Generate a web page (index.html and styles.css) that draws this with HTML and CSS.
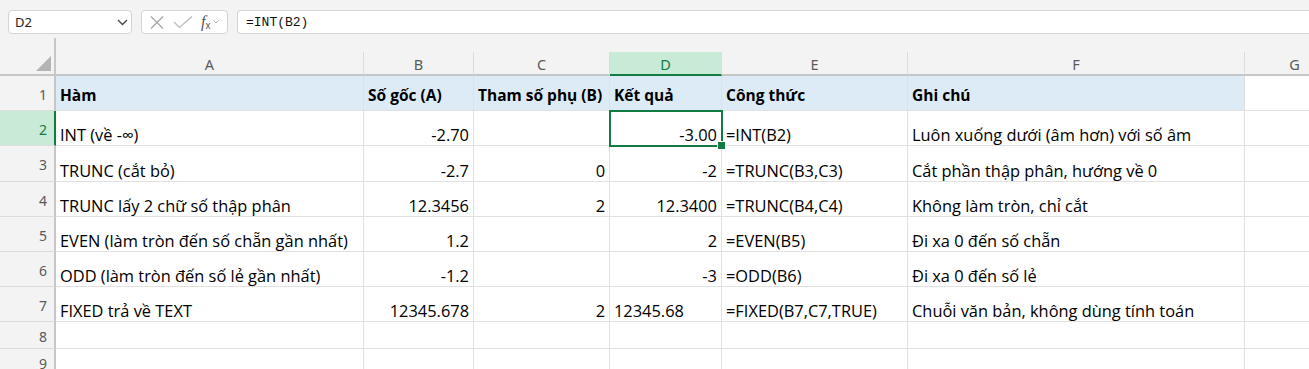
FILE: index.html
```html
<!DOCTYPE html>
<html lang="vi">
<head>
  <meta charset="UTF-8" />
  <title>Sheet1</title>
  <link rel="stylesheet" href="styles.css">
</head>
<body>
  <div class="app">
    <div class="formula-bar">
      <div class="name-box">
        <span>D2</span>
        <svg class="chev" width="11" height="7" viewBox="0 0 11 7"><path d="M1 1l4.5 4.5L10 1" fill="none" stroke="#444" stroke-width="1.3"/></svg>
      </div>
      <div class="fx-box">
        <svg width="14" height="13" viewBox="0 0 14 13"><path d="M1 0.5l12 12M13 0.5l-12 12" fill="none" stroke="#a8a8a8" stroke-width="1.3"/></svg>
        <svg width="20" height="12" viewBox="0 0 20 12"><path d="M1 6l5.5 5.5L19 0.5" fill="none" stroke="#bdbdbd" stroke-width="1.3"/></svg>
        <span class="fx"><i>f</i><sub>x</sub></span>
        <svg width="6" height="4" viewBox="0 0 6 4"><path d="M0.5 0.5l2.5 2.5 2.5-2.5" fill="none" stroke="#aaa" stroke-width="1"/></svg>
      </div>
      <div class="formula-input">=INT(B2)</div>
    </div>

    <div class="grid">
      <div class="corner"><span class="tri"></span></div>
      <div class="gap"></div>

      <div class="ch">A</div>
      <div class="ch">B</div>
      <div class="ch">C</div>
      <div class="ch active">D</div>
      <div class="ch">E</div>
      <div class="ch">F</div>
      <div class="ch">G</div>

      <div class="rh">1</div>
      <div class="cell hdr">Hàm</div>
      <div class="cell hdr">Số gốc (A)</div>
      <div class="cell hdr">Tham số phụ (B)</div>
      <div class="cell hdr">Kết quả</div>
      <div class="cell hdr">Công thức</div>
      <div class="cell hdr">Ghi chú</div>
      <div class="cell"></div>

      <div class="rh active">2</div>
      <div class="cell">INT (về -∞)</div>
      <div class="cell num">-2.70</div>
      <div class="cell num"></div>
      <div class="cell num sel">-3.00</div>
      <div class="cell">=INT(B2)</div>
      <div class="cell">Luôn xuống dưới (âm hơn) với số âm</div>
      <div class="cell"></div>

      <div class="rh">3</div>
      <div class="cell">TRUNC (cắt bỏ)</div>
      <div class="cell num">-2.7</div>
      <div class="cell num">0</div>
      <div class="cell num">-2</div>
      <div class="cell">=TRUNC(B3,C3)</div>
      <div class="cell">Cắt phần thập phân, hướng về 0</div>
      <div class="cell"></div>

      <div class="rh">4</div>
      <div class="cell">TRUNC lấy 2 chữ số thập phân</div>
      <div class="cell num">12.3456</div>
      <div class="cell num">2</div>
      <div class="cell num">12.3400</div>
      <div class="cell">=TRUNC(B4,C4)</div>
      <div class="cell">Không làm tròn, chỉ cắt</div>
      <div class="cell"></div>

      <div class="rh">5</div>
      <div class="cell">EVEN (làm tròn đến số chẵn gần nhất)</div>
      <div class="cell num">1.2</div>
      <div class="cell num"></div>
      <div class="cell num">2</div>
      <div class="cell">=EVEN(B5)</div>
      <div class="cell">Đi xa 0 đến số chẵn</div>
      <div class="cell"></div>

      <div class="rh">6</div>
      <div class="cell">ODD (làm tròn đến số lẻ gần nhất)</div>
      <div class="cell num">-1.2</div>
      <div class="cell num"></div>
      <div class="cell num">-3</div>
      <div class="cell">=ODD(B6)</div>
      <div class="cell">Đi xa 0 đến số lẻ</div>
      <div class="cell"></div>

      <div class="rh">7</div>
      <div class="cell">FIXED trả về TEXT</div>
      <div class="cell num">12345.678</div>
      <div class="cell num">2</div>
      <div class="cell">12345.68</div>
      <div class="cell">=FIXED(B7,C7,TRUE)</div>
      <div class="cell">Chuỗi văn bản, không dùng tính toán</div>
      <div class="cell"></div>

      <div class="rh">8</div>
      <div class="cell"></div>
      <div class="cell"></div>
      <div class="cell"></div>
      <div class="cell"></div>
      <div class="cell"></div>
      <div class="cell"></div>
      <div class="cell"></div>

      <div class="rh">9</div>
      <div class="cell"></div>
      <div class="cell"></div>
      <div class="cell"></div>
      <div class="cell"></div>
      <div class="cell"></div>
      <div class="cell"></div>
      <div class="cell"></div>
    </div>
  </div>
</body>
</html>
```

FILE: styles.css
```css
* {
  box-sizing: border-box;
}

html, body {
  margin: 0;
  padding: 0;
  height: 100%;
  background: #f3f3f3;
  font-family: 'Open Sans', 'Noto Sans', sans-serif;
  overflow: hidden;
}

.app {
  width: 1309px;
}

/* formula bar */

.formula-bar {
  display: flex;
  align-items: flex-start;
  height: 38px;
  padding: 10px 0 0 8px;
  gap: 9px;
}

.name-box,
.fx-box,
.formula-input {
  height: 24px;
  background: #fff;
  border: 1px solid #d4d4d4;
  border-radius: 4px;
  display: flex;
  align-items: center;
}

.name-box {
  width: 124px;
  padding: 0 3px 0 6px;
  justify-content: space-between;
  font-family: 'Noto Sans', sans-serif;
  font-size: 13px;
  color: #222;
}

.fx-box {
  width: 87px;
  padding: 0 4px 0 8px;
  gap: 9px;
}

.fx {
  font-family: 'Liberation Serif', serif;
  font-size: 16px;
  color: #555;
  line-height: 1;
  margin-left: -1px;
}

.fx sub {
  font-family: 'Liberation Sans', sans-serif;
  font-size: 10px;
  vertical-align: -2px;
}

.fx-box svg:last-child {
  margin-left: -6px;
}

.formula-input {
  flex: 1;
  border-right: none;
  border-radius: 4px 0 0 4px;
  padding-left: 8px;
  font-family: 'Liberation Mono', monospace;
  font-size: 13px;
  color: #111;
}

/* sheet grid */

.grid {
  display: grid;
  grid-template-columns: 56px 308px 110px 136px 112px 186px 337px 100px;
  grid-template-rows: 14px 24px 35px 35px 36px 35px 35px 35px 35px 27px 27px;
  background: #fff;
}

.corner {
  grid-row: span 2;
  background: #f3f3f3;
  border-right: 2px solid #c6c6c6;
  border-bottom: 2px solid #c6c6c6;
  display: flex;
  align-items: flex-end;
  justify-content: flex-end;
  padding: 0 3px 3px 0;
}

.tri {
  width: 0;
  height: 0;
  border-left: 15px solid transparent;
  border-bottom: 15px solid #b4b4b4;
}

.gap {
  grid-column: span 7;
  background: #f3f3f3;
}

.ch {
  background: #f3f3f3;
  border-right: 1px solid #dcdcdc;
  border-bottom: 2px solid #c6c6c6;
  display: flex;
  align-items: center;
  justify-content: center;
  font-family: 'Noto Sans', sans-serif;
  font-size: 14.5px;
  color: #5a5a5a;
  padding-top: 1px;
}

.ch.active {
  background: #caead8;
  color: #107c41;
  border-bottom-color: #107c41;
}

.rh {
  background: #f3f3f3;
  border-right: 2px solid #c6c6c6;
  border-bottom: 1px solid #dcdcdc;
  display: flex;
  align-items: center;
  justify-content: flex-end;
  padding: 2px 7px 0 0;
  font-family: 'Noto Sans', sans-serif;
  font-size: 14px;
  color: #5a5a5a;
}

.rh.active {
  background: #caead8;
  color: #107c41;
  border-right-color: #107c41;
}

.cell {
  border-right: 1px solid #e1e1e1;
  border-bottom: 1px solid #e1e1e1;
  display: flex;
  align-items: flex-end;
  padding: 0 4px;
  font-size: 16.4px;
  line-height: 20px;
  color: #000;
  white-space: nowrap;
}

.cell.num {
  justify-content: flex-end;
}

.cell.hdr {
  background: #ddebf7;
  font-size: 15.5px;
  font-weight: 700;
  padding-bottom: 5px;
}

.sel {
  position: relative;
}

.sel::after {
  content: '';
  position: absolute;
  left: -1px;
  top: -1px;
  right: -2px;
  bottom: -2px;
  border: 2px solid #107c41;
}

.sel::before {
  content: '';
  position: absolute;
  right: -5px;
  bottom: -5px;
  width: 7px;
  height: 7px;
  background: #107c41;
  border: 1px solid #fff;
  z-index: 1;
}
```
